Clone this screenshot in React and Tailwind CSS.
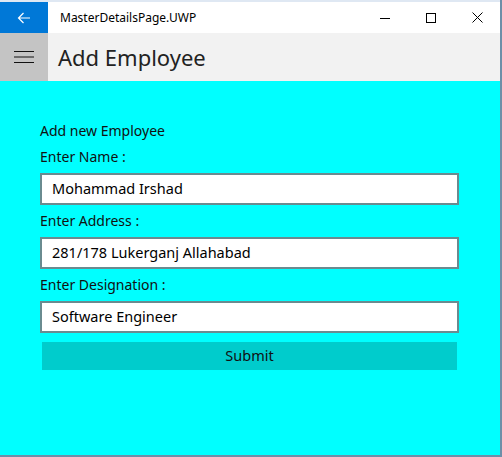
import React from 'react'

const font = { fontFamily: '"Noto Sans", "Open Sans", sans-serif' }

const Field = ({ label, value }) => (
  <>
    <div className="text-[14px] leading-[20px] text-[#111] mt-[6px]">{label}</div>
    <div className="mt-[6px] h-[32px] border-2 border-[#6a8b90] bg-white flex items-center px-[10px] text-[14.5px] text-black">
      {value}
    </div>
  </>
)

export default function App() {
  return (
    <div className="w-[502px] h-[457px] bg-[#e8eef5] flex flex-col" style={font}>
      <div className="flex-1 flex flex-col border-r-2 border-b-2 border-[#6d8fa8] bg-white">
        {/* title bar */}
        <div className="h-[33px] flex items-stretch border-t-2 border-[#dfe8f3] bg-white">
          <div className="w-[48px] bg-[#0078d7] flex items-center justify-center">
            <svg width="14" height="12" viewBox="0 0 14 12" fill="none" stroke="white" strokeWidth="1.2">
              <path d="M13 6H1.5M6.5 1L1.5 6l5 5" />
            </svg>
          </div>
          <div className="flex-1 flex items-center pl-[12px] text-[12px] text-black">MasterDetailsPage.UWP</div>
          <div className="w-[46px] flex items-center justify-center">
            <svg width="10" height="10" viewBox="0 0 10 10" stroke="black" strokeWidth="1"><path d="M0 5.5h10" /></svg>
          </div>
          <div className="w-[46px] flex items-center justify-center">
            <svg width="10" height="10" viewBox="0 0 10 10" fill="none" stroke="black" strokeWidth="1"><rect x="0.5" y="0.5" width="9" height="9" /></svg>
          </div>
          <div className="w-[46px] flex items-center justify-center">
            <svg width="11" height="11" viewBox="0 0 11 11" stroke="black" strokeWidth="1"><path d="M0.5 0.5l10 10M10.5 0.5l-10 10" /></svg>
          </div>
        </div>
        {/* header */}
        <div className="h-[48px] flex bg-[#f2f2f2]">
          <div className="w-[48px] bg-[#c4c4c4] flex items-center justify-center">
            <svg width="20" height="14" viewBox="0 0 20 14" stroke="#111" strokeWidth="1"><path d="M0 1.5h20M0 7h20M0 12.5h20" /></svg>
          </div>
          <div className="flex items-center pl-[10px] text-[22px] text-[#222]">Add Employee</div>
        </div>
        {/* body */}
        <div className="flex-1 bg-[#00ffff] pt-[40px] pl-[40px] pr-[41px]">
          <div className="text-[14px] leading-[20px] text-[#111]">Add new Employee</div>
          <Field label="Enter Name :" value="Mohammad Irshad" />
          <Field label="Enter Address :" value="281/178 Lukerganj Allahabad" />
          <Field label="Enter Designation :" value="Software Engineer" />
          <div className="mt-[9px] mx-[2px] h-[28px] bg-[#00cccc] flex items-center justify-center text-[14.5px] text-[#111]">
            Submit
          </div>
        </div>
      </div>
    </div>
  )
}
